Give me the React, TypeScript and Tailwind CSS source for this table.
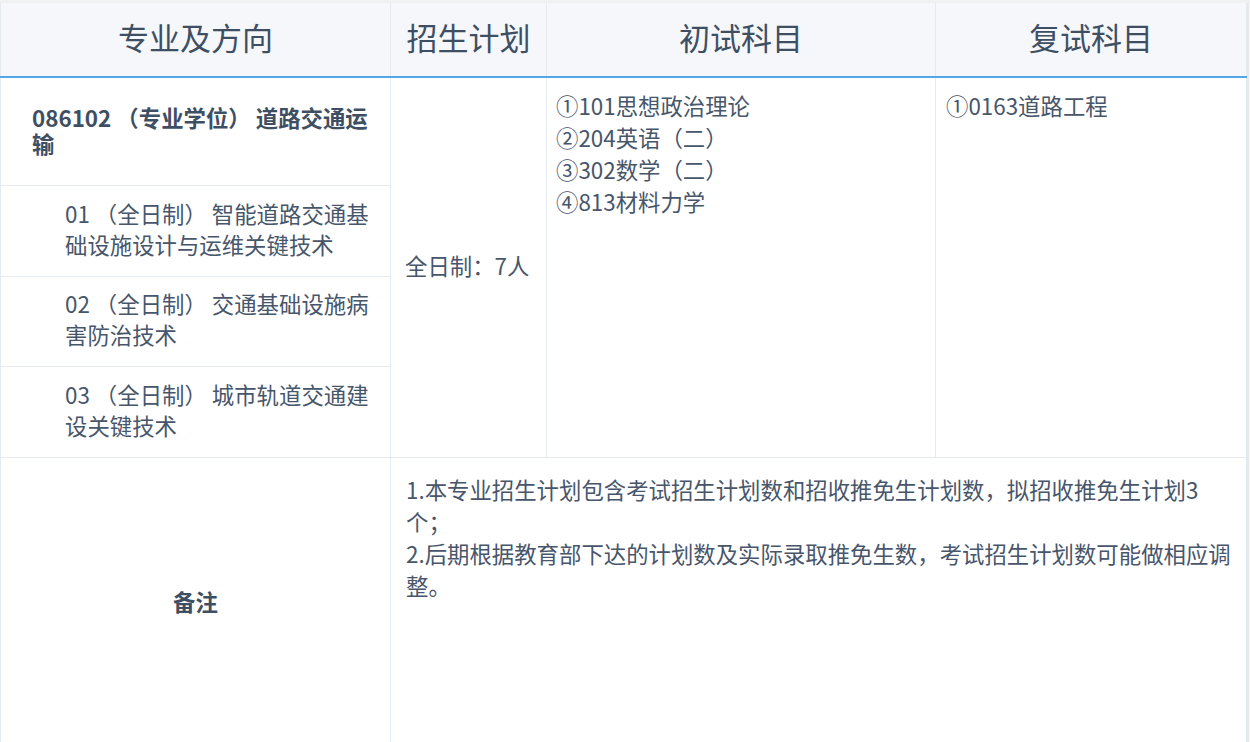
const font = { fontFamily: '"PingFang SC", "Noto Sans CJK SC", "Noto Sans", sans-serif' };

const directions = [
  "01 （全日制） 智能道路交通基础设施设计与运维关键技术",
  "02 （全日制） 交通基础设施病害防治技术",
  "03 （全日制） 城市轨道交通建设关键技术",
];

const firstExam = ["①101思想政治理论", "②204英语（二）", "③302数学（二）", "④813材料力学"];

export default function App() {
  return (
    <div className="min-h-screen w-[1250px] bg-white" style={font}>
      <div className="h-[3px] w-full bg-[#f0f1f3]" />
      <div className="flex">
        <table className="w-[1246px] table-fixed border-collapse text-[#47566b]">
          <colgroup>
            <col className="w-[390px]" />
            <col className="w-[156px]" />
            <col className="w-[389px]" />
            <col className="w-[311px]" />
          </colgroup>
          <thead>
            <tr className="h-[74px] bg-[#f5f7fb] text-[31px] text-[#3f4f63]">
              {["专业及方向", "招生计划", "初试科目", "复试科目"].map((h) => (
                <th
                  key={h}
                  className="border-x border-x-[#e6ebf0] border-b-2 border-b-[#52a6e3] pb-[4px] text-center font-normal"
                >
                  {h}
                </th>
              ))}
            </tr>
          </thead>
          <tbody className="text-[22.4px]">
            <tr className="h-[108px]">
              <td className="border border-[#e6ebf0] pl-[31px] pr-[12px] pb-[2px] align-middle font-semibold leading-[26px] text-[#3f4f63]">
                086102 （专业学位） 道路交通运输
              </td>
              <td rowSpan={4} className="border border-[#e6ebf0] pl-[14px] pb-[4px] align-middle leading-[32px]">
                全日制：7人
              </td>
              <td rowSpan={4} className="border border-[#e6ebf0] px-[9px] pt-[11px] align-top leading-[32px]">
                {firstExam.map((s) => (
                  <div key={s}>{s}</div>
                ))}
              </td>
              <td rowSpan={4} className="border border-[#e6ebf0] px-[10px] pt-[11px] align-top leading-[32px]">
                ①0163道路工程
              </td>
            </tr>
            {directions.map((d, i) => (
              <tr key={d} className={i === 1 ? "h-[90px]" : "h-[91px]"}>
                <td className="border border-[#e6ebf0] pl-[64px] pr-[12px] pb-[4px] align-middle leading-[31px]">{d}</td>
              </tr>
            ))}
            <tr className="h-[290px]">
              <td className="border border-[#e6ebf0] text-center align-middle font-semibold text-[#3f4f63]">备注</td>
              <td colSpan={3} className="border border-[#e6ebf0] pl-[15px] pr-[12px] pt-[15px] align-top leading-[32px]">
                <div>1.本专业招生计划包含考试招生计划数和招收推免生计划数，拟招收推免生计划3个；</div>
                <div>2.后期根据教育部下达的计划数及实际录取推免生数，考试招生计划数可能做相应调整。</div>
              </td>
            </tr>
          </tbody>
        </table>
        <div className="w-[2px] bg-[#e5e7ea]" />
        <div className="w-[2px] bg-[#f7f8f9]" />
      </div>
    </div>
  );
}
